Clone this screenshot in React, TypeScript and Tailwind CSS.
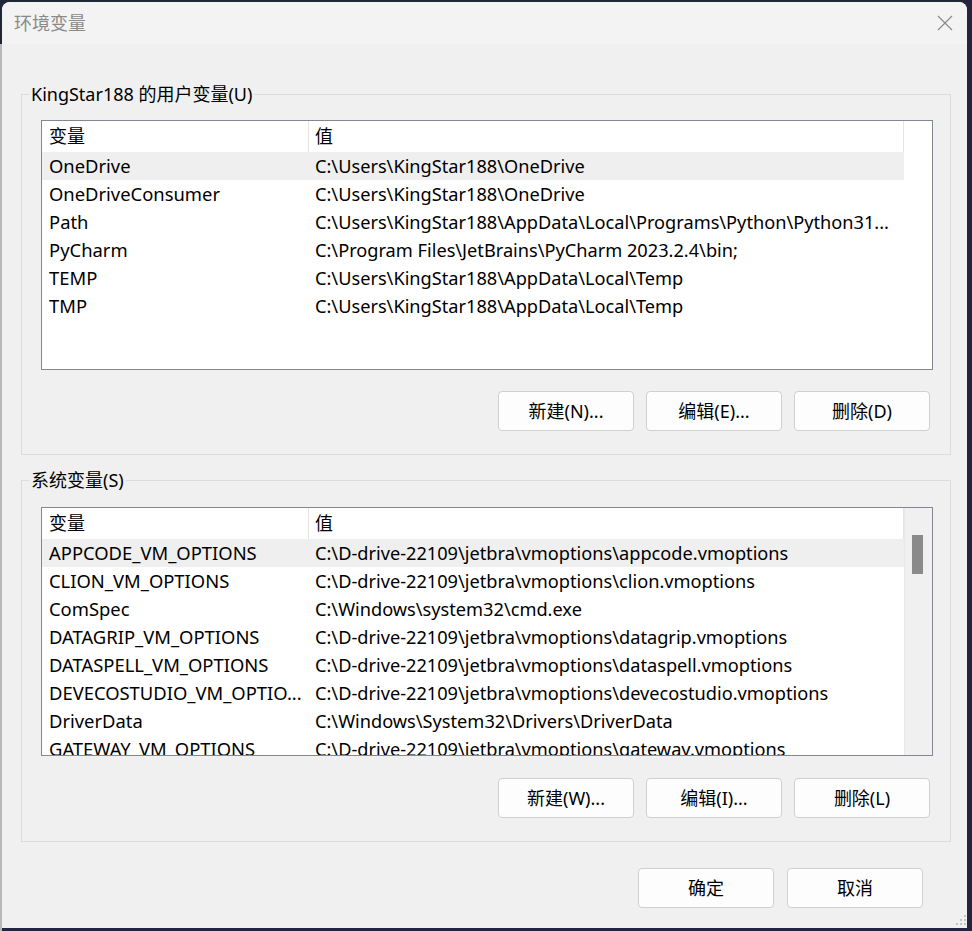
import React from "react";

const userVars = [
  {name: "OneDrive", value: "C:\\Users\\KingStar188\\OneDrive"},
  {name: "OneDriveConsumer", value: "C:\\Users\\KingStar188\\OneDrive"},
  {name: "Path", value: "C:\\Users\\KingStar188\\AppData\\Local\\Programs\\Python\\Python31..."},
  {name: "PyCharm", value: "C:\\Program Files\\JetBrains\\PyCharm 2023.2.4\\bin;"},
  {name: "TEMP", value: "C:\\Users\\KingStar188\\AppData\\Local\\Temp"},
  {name: "TMP", value: "C:\\Users\\KingStar188\\AppData\\Local\\Temp"},
];

const sysVars = [
  {name: "APPCODE_VM_OPTIONS", value: "C:\\D-drive-22109\\jetbra\\vmoptions\\appcode.vmoptions"},
  {name: "CLION_VM_OPTIONS", value: "C:\\D-drive-22109\\jetbra\\vmoptions\\clion.vmoptions"},
  {name: "ComSpec", value: "C:\\Windows\\system32\\cmd.exe"},
  {name: "DATAGRIP_VM_OPTIONS", value: "C:\\D-drive-22109\\jetbra\\vmoptions\\datagrip.vmoptions"},
  {name: "DATASPELL_VM_OPTIONS", value: "C:\\D-drive-22109\\jetbra\\vmoptions\\dataspell.vmoptions"},
  {name: "DEVECOSTUDIO_VM_OPTIO...", value: "C:\\D-drive-22109\\jetbra\\vmoptions\\devecostudio.vmoptions"},
  {name: "DriverData", value: "C:\\Windows\\System32\\Drivers\\DriverData"},
  {name: "GATEWAY_VM_OPTIONS", value: "C:\\D-drive-22109\\jetbra\\vmoptions\\gateway.vmoptions"},
];

function WinButton({label}: {label: string}) {
  return (
    <button className="w-[136px] h-[40px] rounded-[4px] border border-[#d0d0d0] bg-[#fdfdfd] text-[18px] leading-[38px] text-black">
      {label}
    </button>
  );
}

// list view with header + rows, optional scrollbar on the right
function VarList({rows, height, scroll}: {rows: {name: string; value: string}[]; height: string; scroll?: boolean}) {
  return (
    <div className={`flex w-full border border-[#828790] bg-white overflow-hidden ${height}`}>
      <div className="w-[862px] flex flex-col">
        <div className="flex h-[31px] shrink-0">
          <div className="w-[267px] border-r border-[#e5e5e5] pl-[7px] leading-[31px]">变量</div>
          <div className="w-[595px] border-r border-[#e5e5e5] pl-[6px] leading-[31px]">值</div>
        </div>
        {rows.map((r, i) => (
          <div key={r.name} className={`flex h-[28px] shrink-0 leading-[28px] whitespace-nowrap ${i === 0 ? "bg-[#efefef]" : ""}`}>
            <div className="w-[267px] pl-[7px] overflow-hidden text-[18.4px]">{r.name}</div>
            <div className="w-[595px] pl-[6px] overflow-hidden text-[18.2px]">{r.value}</div>
          </div>
        ))}
      </div>
      {scroll ? (
        <div className="flex-1 bg-[#f0f0f0] border-l border-[#e8e8e8] pl-[7px] pt-[27px]">
          <div className="w-[11px] h-[39px] bg-[#8a8a8a]" />
        </div>
      ) : (
        <div className="flex-1 bg-white" />
      )}
    </div>
  );
}

export default function App() {
  return (
    <div className="w-[972px] h-[931px] flex bg-[#262340] overflow-hidden text-black [font-family:'Noto_Sans','Noto_Sans_CJK_SC',sans-serif]">
      {/* sliver of the window behind */}
      <div className="w-[2px] flex flex-col">
        <div className="h-[44px] bg-[#1e2834]" />
        <div className="flex-1 bg-[#b8b8b8]" />
      </div>

      <div className="flex flex-col">
        <div className="h-[2px] bg-[#1e2834] w-[965px]" />
        <div className="w-[965px] h-[926px] bg-[#f0f0f0] rounded-t-[8px] flex flex-col overflow-hidden">
          {/* title bar */}
          <div className="h-[42px] shrink-0 bg-[#f3f3f3] flex items-center justify-between pl-[12px] pr-[14px]">
            <span className="text-[18px] text-[#8a8a8a]">环境变量</span>
            <svg width="16" height="16" viewBox="0 0 16 16">
              <path d="M1 1L15 15M15 1L1 15" stroke="#8a8a8a" strokeWidth="1.2" fill="none" />
            </svg>
          </div>

          <div className="flex flex-col pl-[19px] pr-[16px] pt-[38px]">
            <fieldset className="border border-[#dcdcdc] pl-[19px] pr-[17px] pt-[14px] pb-[23px]">
              <legend className="-ml-[12px] px-[2px] h-[24px] text-[18px] leading-[24px]">KingStar188 的用户变量(U)</legend>
              <div className="text-[18px]">
                <VarList rows={userVars} height="h-[250px]" />
              </div>
              <div className="flex justify-end gap-[12px] pr-[3px] mt-[21px]">
                <WinButton label="新建(N)..." />
                <WinButton label="编辑(E)..." />
                <WinButton label="删除(D)" />
              </div>
            </fieldset>

            <fieldset className="mt-[13px] border border-[#dcdcdc] pl-[19px] pr-[17px] pt-[15px] pb-[23px]">
              <legend className="-ml-[12px] px-[2px] h-[24px] text-[18px] leading-[24px]">系统变量(S)</legend>
              <div className="text-[18px]">
                <VarList rows={sysVars} height="h-[249px]" scroll />
              </div>
              <div className="flex justify-end gap-[12px] pr-[3px] mt-[22px]">
                <WinButton label="新建(W)..." />
                <WinButton label="编辑(I)..." />
                <WinButton label="删除(L)" />
              </div>
            </fieldset>
          </div>

          <div className="flex justify-end items-end mt-[26px]">
            <div className="flex gap-[13px] mb-[18px]">
              <WinButton label="确定" />
              <WinButton label="取消" />
            </div>
            {/* resize grip */}
            <svg width="12" height="12" viewBox="0 0 12 12" className="ml-[32px]">
              <rect x="9" y="1" width="2" height="2" fill="#c4c4c4" />
              <rect x="5" y="5" width="2" height="2" fill="#c4c4c4" />
              <rect x="9" y="5" width="2" height="2" fill="#c4c4c4" />
              <rect x="1" y="9" width="2" height="2" fill="#c4c4c4" />
              <rect x="5" y="9" width="2" height="2" fill="#c4c4c4" />
              <rect x="9" y="9" width="2" height="2" fill="#c4c4c4" />
            </svg>
          </div>
        </div>
      </div>
    </div>
  );
}
